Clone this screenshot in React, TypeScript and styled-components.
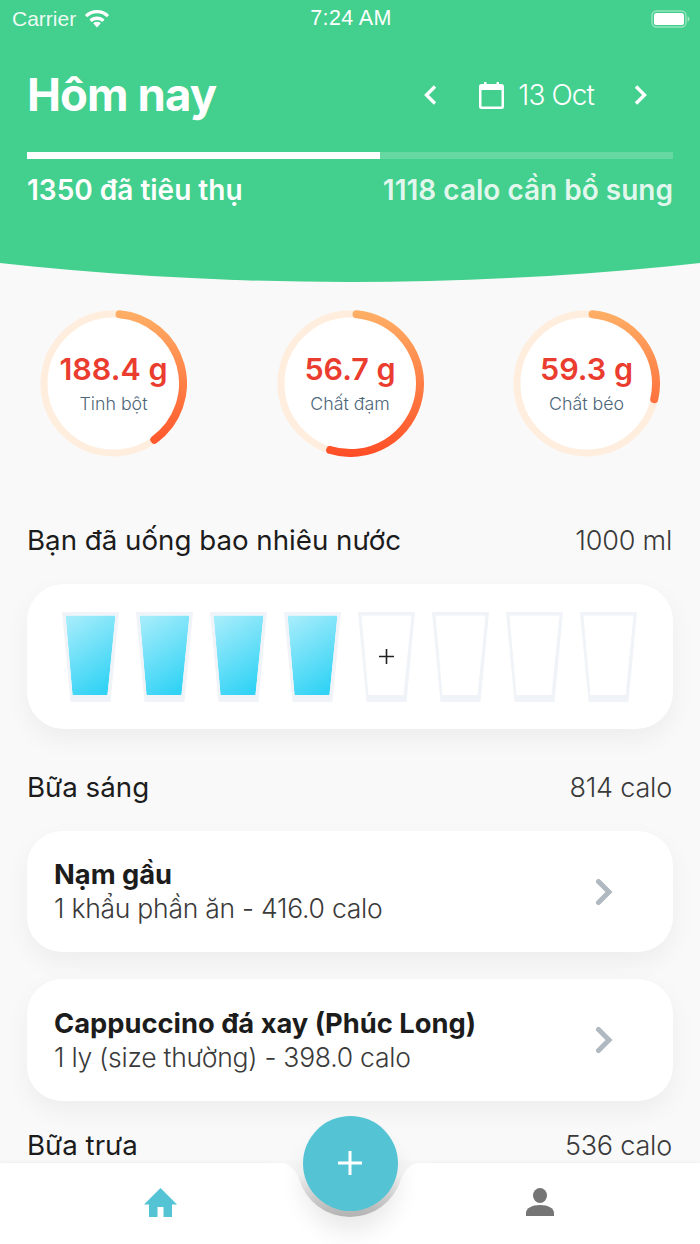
import React from "react";
import styled, { createGlobalStyle } from "styled-components";

const Global = createGlobalStyle`
  html, body { margin: 0; padding: 0; background: #f9f9f9; }
  body { font-family: Inter, "Noto Sans", "Liberation Sans", sans-serif; }
  #root { width: 700px; height: 1244px; overflow: hidden; }
  * { box-sizing: border-box; }
`;

const Page = styled.div`
  width: 700px; height: 1244px; display: flex; flex-direction: column;
  position: relative; background: #f9f9f9; overflow: hidden;
`;
const Scroll = styled.div`flex: 1; min-height: 0; overflow: hidden;`;
const Header = styled.header`
  height: 282px; background: #43cf8d; color: #fff; display: flex; flex-direction: column;
  clip-path: circle(3233px at 350px -2951px);
`;
const StatusBar = styled.div`
  height: 37px; padding: 0 10px 0 12px; display: grid; grid-template-columns: 1fr auto 1fr; align-items: center;
  font-family: "Liberation Sans", sans-serif; font-size: 21px; color: #fff;
`;
const Carrier = styled.div`display: flex; align-items: center; gap: 8px; color: rgba(255,255,255,.92);`;
const Clock = styled.span`font-size: 21.5px; letter-spacing: .4px;`;
const Battery = styled.div`justify-self: end; display: flex;`;
const TitleRow = styled.div`
  display: flex; align-items: center; justify-content: space-between; padding: 0 53px 0 27px; margin-top: 27px; height: 62px;
`;
const Title = styled.h1`margin: 0; font-size: 45.5px; line-height: 62px; font-weight: 700; letter-spacing: -.9px;`;
const DateNav = styled.div`display: flex; align-items: center;`;
const DateLabel = styled.span`font-size: 28px; font-weight: 300; letter-spacing: -.9px; margin: 0 40px 0 14px;`;
const CalWrap = styled.span`display: flex; margin-left: 42px;`;
const Track = styled.div`margin: 26px 27px 0; height: 7px; background: rgba(255,255,255,.2); display: flex;`;
const Fill = styled.div`height: 100%; background: #fff;`;
const Totals = styled.div`display: flex; justify-content: space-between; padding: 0 27px; margin-top: 14px; font-size: 28px; line-height: 34px; font-weight: 600;`;
const Remain = styled.span`color: rgba(255,255,255,.85);`;

const Rings = styled.section`display: flex; justify-content: space-between; padding: 28px 40px 0; height: 173px;`;
const Ring = styled.div`position: relative; width: 147px; height: 147px; display: flex; flex-direction: column; align-items: center; justify-content: center;`;
const RingSvg = styled.svg`position: absolute; inset: 0;`;
const RingValue = styled.div`position: relative; color: #ea3d2f; font-size: 30.5px; line-height: 36px; font-weight: 600; margin-top: -1px;`;
const RingLabel = styled.div`position: relative; color: #4d6678; font-size: 17.8px; line-height: 24px; margin-top: 5px; font-weight: 300;`;

const SectionHead = styled.div<{ $top: number }>`
  display: flex; justify-content: space-between; align-items: center; padding: 0 28px 0 27px; margin-top: ${p => p.$top}px; height: 36px;
`;
const SectionTitle = styled.h2`margin: 0; font-size: 27.7px; font-weight: 400; color: #1c1c1c;`;
const SectionValue = styled.span`font-size: 27px; font-weight: 300; color: #3a3a3a; letter-spacing: -.2px;`;

const WaterCard = styled.div`
  margin: 26px 27px 0; height: 145px; border-radius: 37px; background: #fff; box-shadow: 0 10px 26px rgba(0,0,0,.05);
  display: flex; gap: 17px; padding: 28px 35px 0;
`;
const Glass = styled.div`position: relative; width: 57px; height: 90px; display: flex; align-items: center; justify-content: center;`;
const GlassSvg = styled.svg`position: absolute; inset: 0;`;
const Plus = styled.svg`position: relative; margin-top: -1px;`;

const FoodCard = styled.div<{ $top: number; $height: number }>`
  margin: ${p => p.$top}px 27px 0; height: ${p => p.$height}px; border-radius: 35px; background: #fff; box-shadow: 0 10px 26px rgba(0,0,0,.05);
  display: flex; align-items: center; justify-content: space-between; padding: 0 58px 0 27px;
`;
const FoodName = styled.div`font-size: 27.3px; line-height: 34px; font-weight: 700; color: #1c1c1c;`;
const FoodInfo = styled.div`font-size: 26.5px; line-height: 33px; font-weight: 300; color: #3a3a3a; letter-spacing: -.25px;`;

const TabBar = styled.nav`
  height: 81px; background: #fff; box-shadow: 0 -1px 3px rgba(0,0,0,.05); display: flex; gap: 58px; position: relative;
`;
const Tab = styled.div`flex: 1; display: flex; justify-content: center; padding-top: 25px;`;
const Notch = styled.svg`position: absolute; left: 270px; top: -2px;`;
const Fab = styled.div`
  position: absolute; left: 302.5px; top: 1115.5px; width: 95px; height: 95px; border-radius: 50%; background: #54c4d4;
  box-shadow: 0 20px 24px rgba(0,0,0,.09);
  display: flex; align-items: center; justify-content: center;
`;

function Progress({ id, deg, value, label }: { id: string; deg: number; value: string; label: string }) {
  const r = 69.5, c = 73.5;
  const a0 = (5 - 90) * Math.PI / 180;
  const a1 = (deg - 90) * Math.PI / 180;
  const x0 = c + r * Math.cos(a0), y0 = c + r * Math.sin(a0);
  const x1 = c + r * Math.cos(a1), y1 = c + r * Math.sin(a1);
  return (
    <Ring>
      <RingSvg width="147" height="147" viewBox="0 0 147 147">
        <defs>
          <linearGradient id={id} gradientUnits="userSpaceOnUse" x1="0" y1="0" x2="0" y2="147">
            <stop offset="0" stopColor="#ffb066" />
            <stop offset="1" stopColor="#ff4d26" />
          </linearGradient>
        </defs>
        <circle cx={c} cy={c} r={r} fill="#fff" stroke="#ffeede" strokeWidth="7" />
        <path
          d={`M${x0} ${y0}A${r} ${r} 0 ${deg > 185 ? 1 : 0} 1 ${x1} ${y1}`}
          fill="none" stroke={`url(#${id})`} strokeWidth="8" strokeLinecap="round"
        />
      </RingSvg>
      <RingValue>{value}</RingValue>
      <RingLabel>{label}</RingLabel>
    </Ring>
  );
}

function WaterGlass({ id, filled }: { id: string; filled: boolean }) {
  return (
    <Glass>
      <GlassSvg width="57" height="90" viewBox="0 0 57 90">
        <defs>
          <linearGradient id={id} x1="0.2" y1="0" x2="0.6" y2="1">
            <stop offset="0" stopColor="#a3ecfb" />
            <stop offset="1" stopColor="#33d3f5" />
          </linearGradient>
        </defs>
        {filled && <path d="M3.500 3.500H53.500L45.500 83H10.500Z" fill={`url(#${id})`} />}
        <path d="M0 0H57L48.500 90H8.500ZM3.500 3.500 10.500 83H45.500L53.500 3.500Z" fill="#f0f3f7" fillRule="evenodd" />
      </GlassSvg>
      {!filled && id === "g5" && (
        <Plus width="15" height="15" viewBox="0 0 15 15">
          <path d="M7.500 0V15M0 7.500H15" stroke="#222" strokeWidth="1.6" />
        </Plus>
      )}
    </Glass>
  );
}

const Chevron = () => (
  <svg width="20" height="28" viewBox="0 0 20 28" fill="none"><path d="M3.500 3.500 14 14 3.500 24.500" stroke="#b0b8c0" strokeWidth="5" strokeLinecap="round" /></svg>
);

export default function App() {
  return (
    <Page>
      <Global />
      <Scroll>
        <Header>
          <StatusBar>
            <Carrier>
              Carrier
              <svg width="26" height="19" viewBox="0 0 26 19" fill="#fff">
                <path d="M13 18.500 9.200 14.200a5.600 5.600 0 0 1 7.600 0ZM13 7.600c-2.900 0-5.600 1.100-7.500 3L7.600 13a8.100 8.100 0 0 1 10.800 0l2.100-2.400c-1.900-1.900-4.600-3-7.500-3ZM13 1C8.300 1 4 2.900.9 5.900l2.200 2.400C5.700 5.800 9.100 4.200 13 4.200s7.300 1.600 9.900 4.100l2.200-2.400C22 2.900 17.700 1 13 1Z" />
              </svg>
            </Carrier>
            <Clock>7:24 AM</Clock>
            <Battery>
              <svg width="39" height="20" viewBox="0 0 39 20">
                <rect x="1" y="2" width="34" height="16" rx="4.500" fill="none" stroke="#fff" strokeOpacity=".45" strokeWidth="1.400" />
                <rect x="3" y="4" width="30" height="12" rx="2.600" fill="#fff" />
                <path d="M36.600 7.500c1.200.3 1.800 1.200 1.800 2.500s-.6 2.200-1.800 2.500Z" fill="#fff" fillOpacity=".5" />
              </svg>
            </Battery>
          </StatusBar>
          <TitleRow>
            <Title>Hôm nay</Title>
            <DateNav>
              <svg width="13" height="20" viewBox="0 0 13 20" fill="none"><path d="M11 1.500 2.500 10l8.500 8.500" stroke="#fff" strokeWidth="3.400" /></svg>
              <CalWrap>
                <svg width="25" height="27" viewBox="0 0 25 27">
                  <path fillRule="evenodd" fill="#fff" d="M5 0h2.500v2h10V0H20v2h2.500A2.500 2.500 0 0 1 25 4.500v20a2.500 2.500 0 0 1-2.500 2.500h-20A2.500 2.500 0 0 1 0 24.500v-20A2.500 2.500 0 0 1 2.500 2H5ZM2.500 8v16.500h20V8Z" />
                </svg>
              </CalWrap>
              <DateLabel>13 Oct</DateLabel>
              <svg width="13" height="20" viewBox="0 0 13 20" fill="none"><path d="M2 1.500 10.500 10 2 18.500" stroke="#fff" strokeWidth="3.400" /></svg>
            </DateNav>
          </TitleRow>
          <Track><Fill style={{ width: `${(1350 / 2468) * 100}%` }} /></Track>
          <Totals>
            <span>1350 đã tiêu thụ</span>
            <Remain>1118 calo cần bổ sung</Remain>
          </Totals>
        </Header>
        <Rings>
          <Progress id="r1" deg={144} value="188.4 g" label="Tinh bột" />
          <Progress id="r2" deg={197} value="56.7 g" label="Chất đạm" />
          <Progress id="r3" deg={103} value="59.3 g" label="Chất béo" />
        </Rings>
        <SectionHead $top={67}>
          <SectionTitle>Bạn đã uống bao nhiêu nước</SectionTitle>
          <SectionValue>1000 ml</SectionValue>
        </SectionHead>
        <WaterCard>
          {[1, 2, 3, 4, 5, 6, 7, 8].map(i => <WaterGlass key={i} id={`g${i}`} filled={i < 5} />)}
        </WaterCard>
        <SectionHead $top={40}>
          <SectionTitle>Bữa sáng</SectionTitle>
          <SectionValue>814 calo</SectionValue>
        </SectionHead>
        <FoodCard $top={26} $height={121}>
          <div>
            <FoodName>Nạm gầu</FoodName>
            <FoodInfo>1 khẩu phần ăn - 416.0 calo</FoodInfo>
          </div>
          <Chevron />
        </FoodCard>
        <FoodCard $top={27} $height={122}>
          <div>
            <FoodName>Cappuccino đá xay (Phúc Long)</FoodName>
            <FoodInfo>1 ly (size thường) - 398.0 calo</FoodInfo>
          </div>
          <Chevron />
        </FoodCard>
        <SectionHead $top={26}>
          <SectionTitle>Bữa trưa</SectionTitle>
          <SectionValue>536 calo</SectionValue>
        </SectionHead>
      </Scroll>
      <TabBar>
        <Tab>
          <svg width="33" height="29" viewBox="0 0 33 29" fill="#54c4d4"><path d="M16.500 0 33 16.500h-5V29h-8.500V19h-6v10H5V16.500H0Z" /></svg>
        </Tab>
        <Tab>
          <svg width="28" height="28" viewBox="0 0 28 28" fill="#757575"><ellipse cx="14" cy="7.500" rx="7" ry="7.500" /><path d="M0 28v-3c0-5 6-8 14-8s14 3 14 8v3Z" /></svg>
        </Tab>
        <Notch width="160" height="60" viewBox="0 0 160 60">
          <defs>
            <linearGradient id="notch" x1="0" y1="0" x2="0" y2="1">
              <stop offset=".25" stopColor="#f6f6f6" />
              <stop offset="1" stopColor="#c2c2c2" />
            </linearGradient>
          </defs>
          <path d="M0 0V1.500H8C18 1.500 25 8 29 18A53.200 53.200 0 0 0 131 18C135 8 142 1.500 152 1.500H160V0Z" fill="url(#notch)" />
        </Notch>
      </TabBar>
      <Fab>
        <svg width="24" height="24" viewBox="0 0 24 24"><path d="M12 0V24M0 12H24" stroke="#fff" strokeWidth="3" /></svg>
      </Fab>
    </Page>
  );
}
